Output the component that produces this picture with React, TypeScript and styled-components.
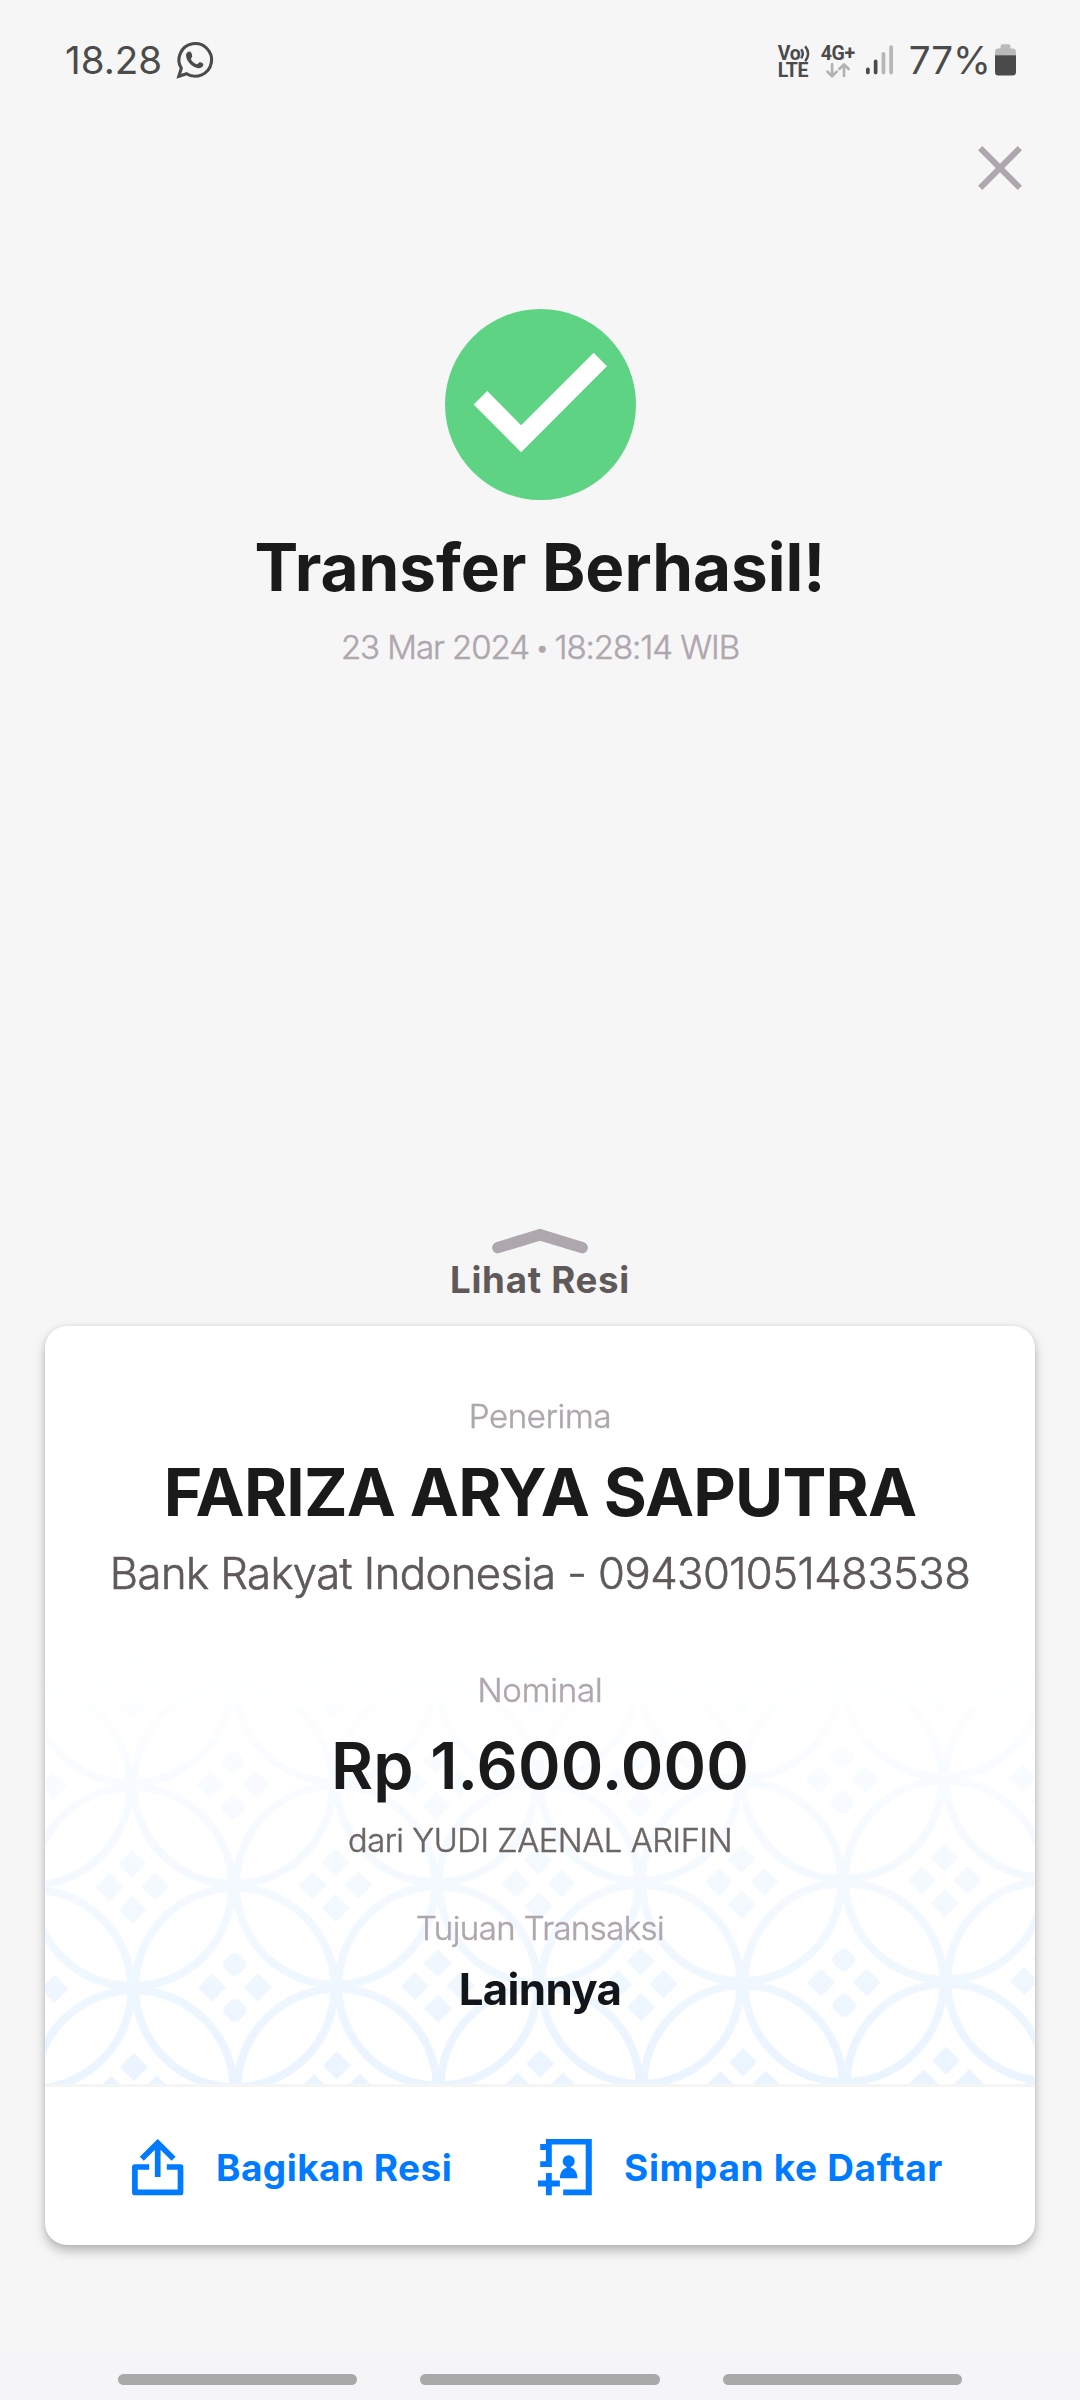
import React from "react";
import styled, { createGlobalStyle } from "styled-components";

const GlobalStyle = createGlobalStyle`
  *, *::before, *::after { box-sizing: border-box; }
  html, body { margin: 0; padding: 0; background: #f6f6f6; }
  body { font-family: Inter, "Liberation Sans", sans-serif; }
  button { border: 0; padding: 0; background: none; font: inherit; }
`;

const ink = "#1a1a1a";
const mutedInk = "#5f5959";
const faint = "#aea7ae";
const brand = "#007bff";
const system = "#4b4b4b";

const Screen = styled.div`
  display: flex;
  flex-direction: column;
  width: 1080px;
  height: 2400px;
  overflow: hidden;
  background: #f6f6f6;
`;

const StatusBar = styled.header`
  display: flex;
  align-items: center;
  justify-content: space-between;
  height: 120px;
  padding: 0 64px 0 65px;
  color: ${system};
`;

const StatusGroup = styled.div<{ $gap: number }>`
  display: flex;
  align-items: center;
  gap: ${(p) => p.$gap}px;
`;

const StatusText = styled.span<{ $spacing?: number }>`
  font-size: 38.6px;
  font-weight: 400;
  line-height: 48px;
  letter-spacing: ${(p) => p.$spacing ?? 0}px;
`;

const BatteryGroup = styled.div`
  display: flex;
  align-items: center;
  gap: 4px;
  margin-left: 3px;
`;

const StatusGlyph = styled.svg`
  display: block;
  flex: none;
  overflow: visible;
`;

const NetworkBadge = styled.div<{ $width: number }>`
  display: flex;
  flex-direction: column;
  width: ${(p) => p.$width}px;
  padding-top: 3px;
  font-family: Roboto, sans-serif;
  font-size: 19.5px;
  font-weight: 700;
  letter-spacing: -0.3px;
`;

const BadgeLine = styled.div<{ $inset?: number }>`
  display: flex;
  align-items: center;
  height: 17px;
  padding-left: ${(p) => p.$inset ?? 0}px;
  line-height: 17px;
`;

const TopBar = styled.div`
  display: flex;
  align-items: center;
  justify-content: flex-end;
  height: 96px;
  padding-right: 58px;
`;

const CloseButton = styled.button`
  display: block;
  width: 44px;
  height: 44px;
`;

const Hero = styled.section`
  display: flex;
  flex-direction: column;
  align-items: center;
  padding-top: 93px;
`;

const Title = styled.h1`
  margin: 27px 0 0;
  font-size: 65.6px;
  font-weight: 700;
  line-height: 80px;
  letter-spacing: -0.02px;
  color: ${ink};
`;

const Timestamp = styled.p`
  display: flex;
  align-items: center;
  gap: 6.5px;
  height: 44px;
  margin: 18px 0 0;
  font-size: 33px;
  font-weight: 300;
  line-height: 44px;
  letter-spacing: -1.05px;
  color: ${faint};
  -webkit-text-stroke: 0.5px ${faint};
`;

const Bullet = styled.span`
  padding-top: 2px;
  font-size: 24px;
  line-height: 40px;
`;

const ReceiptToggle = styled.button`
  display: flex;
  flex-direction: column;
  align-items: center;
  gap: 4px;
  margin-top: 559px;
`;

const ToggleLabel = styled.span`
  font-size: 36.7px;
  font-weight: 700;
  line-height: 44px;
  letter-spacing: 0.7px;
  color: ${mutedInk};
`;

const Card = styled.article`
  display: flex;
  flex-direction: column;
  width: 990px;
  height: 919px;
  margin: 24px auto 0;
  overflow: hidden;
  border-radius: 22px;
  background: #fff;
  box-shadow: 0 6px 11px rgba(0, 0, 0, 0.25), 0 0 5px rgba(0, 0, 0, 0.08);
`;

const CardBody = styled.div`
  position: relative;
  display: flex;
  flex-direction: column;
  align-items: center;
  height: 758px;
  padding-top: 70px;
`;

const BatikLayer = styled.svg`
  position: absolute;
  left: 0;
  bottom: 0;
  display: block;
`;

const Content = styled.div`
  position: relative;
  display: flex;
  flex-direction: column;
  align-items: center;
  white-space: nowrap;
`;

const Label = styled.span<{ $top?: number; $spacing?: number }>`
  margin-top: ${(p) => p.$top ?? 0}px;
  font-size: 33px;
  font-weight: 300;
  line-height: 40px;
  letter-spacing: ${(p) => p.$spacing ?? 0}px;
  color: ${faint};
  -webkit-text-stroke: 0.5px ${faint};
`;

const Headline = styled.strong<{ $weight: number; $size: number; $spacing: number }>`
  margin-top: 20px;
  font-size: ${(p) => p.$size}px;
  font-weight: ${(p) => p.$weight};
  line-height: 72px;
  letter-spacing: ${(p) => p.$spacing}px;
  color: ${ink};
`;

const Account = styled.span`
  margin-top: 20px;
  font-size: 43.6px;
  font-weight: 300;
  line-height: 52px;
  letter-spacing: -0.55px;
  color: ${mutedInk};
  -webkit-text-stroke: 0.6px ${mutedInk};
`;

const Sender = styled.span`
  margin-top: 18px;
  font-size: 32.7px;
  font-weight: 300;
  line-height: 40px;
  letter-spacing: -0.42px;
  color: #6c6666;
  -webkit-text-stroke: 0.5px #6c6666;
`;

const Purpose = styled.strong`
  margin-top: 17px;
  font-size: 43.8px;
  font-weight: 700;
  line-height: 50px;
  letter-spacing: -0.65px;
  color: #12161a;
`;

const Actions = styled.footer`
  display: grid;
  grid-template-columns: 406px 1fr;
  align-items: center;
  flex: 1;
  padding: 2px 0 0 87px;
  border-top: 3px solid #f5f5f5;
`;

const Action = styled.button<{ $spacing: number }>`
  display: flex;
  align-items: center;
  gap: 32px;
  font-size: 37px;
  font-weight: 700;
  line-height: 56px;
  letter-spacing: ${(p) => p.$spacing}px;
  white-space: nowrap;
  color: ${brand};
`;

const ActionText = styled.span`
  padding-top: 1px;
`;

const NavBar = styled.nav`
  display: flex;
  align-items: flex-end;
  gap: 63px;
  height: 48px;
  margin-top: auto;
  padding: 0 118px 15px;
  background: #f5f5f8;
`;

const NavHandle = styled.span`
  flex: 1;
  height: 11px;
  border-radius: 6px;
  background: #a9a9a9;
`;

function ChatIcon() {
  return (
    <StatusGlyph width="36" height="36" viewBox="0 0 36 36" fill="none">
      <path
        d="M4.3 26.3 L1.8 34.3 L9.6 31.7 A16.3 16.3 0 1 0 4.3 26.3Z"
        stroke={system}
        strokeWidth="3.1"
      />
      <path
        d="M9 13C9 10.5 11.5 9.3 13 9.6C14.3 9.8 15.3 13 15.2 14.5C15.1 15.7 13.6 16.2 14 17.3C15 19.8 17.5 21.8 19.8 22.3C21 22.4 21.5 20.3 23 20.2C24.5 20.2 26.5 21.3 26.4 22.7C26.2 24.8 23.5 26.3 21.5 26.2C15.5 25.6 9 19.5 9 13Z"
        fill={system}
      />
    </StatusGlyph>
  );
}

function VoiceWaves() {
  return (
    <StatusGlyph width="10" height="17" viewBox="0 0 10 17" fill="none" stroke={system} strokeWidth="2.4">
      <path d="M1.2 4.2Q4.4 8.6 1.2 13.4" />
      <path d="M5.2 1.2Q11 8.6 5.2 16.2" />
    </StatusGlyph>
  );
}

function DataArrows() {
  return (
    <StatusGlyph width="24" height="15" viewBox="0 0 24 15" fill="none" stroke="#b3b3b3" strokeWidth="2.7" strokeLinecap="round" strokeLinejoin="round">
      <path d="M6.1 1.4V13M1.4 8.6L6.1 13.2L10.8 8.6" />
      <path d="M18 13V2M13.3 6L18 1.4L22.7 6" />
    </StatusGlyph>
  );
}

function SignalIcon() {
  return (
    <StatusGlyph width="28" height="30" viewBox="0 0 28 30">
      <rect x="0" y="22.4" width="3.7" height="7" rx="1.8" fill={system} />
      <rect x="7.8" y="14.6" width="3.7" height="14.8" rx="1.8" fill={system} />
      <rect x="15.6" y="7" width="3.7" height="22.4" rx="1.8" fill="#b6b6b6" />
      <rect x="23.3" y="0.3" width="3.7" height="29.1" rx="1.8" fill="#b6b6b6" />
    </StatusGlyph>
  );
}

function BatteryIcon() {
  return (
    <StatusGlyph width="21" height="32" viewBox="0 0 21 32">
      <path d="M0 11.5V8Q0 4.6 3.4 4.6H5.6V2Q5.6 .2 7.4 .2H13.6Q15.4 .2 15.4 2V4.6H17.6Q21 4.6 21 8V11.5Z" fill="#bababa" />
      <path d="M0 11.3H21V28Q21 31.5 17.6 31.5H3.4Q0 31.5 0 28Z" fill={system} />
    </StatusGlyph>
  );
}

function SuccessMark() {
  return (
    <svg width="191" height="191" viewBox="0 0 191 191">
      <circle cx="95.5" cy="95.5" r="95.5" fill="#5ed383" />
      <path d="M148.7 43.7L161.9 57.2L76.1 143.2L28.6 95.4L42.2 82L76.1 116.2Z" fill="#fff" />
    </svg>
  );
}

function ShareIcon() {
  return (
    <svg width="52" height="57" viewBox="0 0 52 57" fill="none" stroke={brand} strokeWidth="5.7">
      <path d="M17.2 28H2.9V53.4H48.5V28H34.8" strokeLinejoin="round" />
      <path d="M9.8 19.8L25.7 4L41.6 19.8M25.7 4V38" />
    </svg>
  );
}

function SaveContactIcon() {
  return (
    <svg width="54" height="57" viewBox="0 0 54 57" fill={brand}>
      <path d="M7.9 0H53.8V56.2H25.2V50.4H47.7V5.6H13.8V28H2.2V22.3H7.9V11H2.2V5H7.9Z" />
      <path d="M7.9 34H13.8V41.5H21.9V47.6H13.8V56.2H7.9V47.6H0V41.5H7.9Z" />
      <circle cx="30.7" cy="22.3" r="6" />
      <path d="M21.9 39.2C22 33 25 29.6 28.6 28.8V26H32.8V28.8C36.4 29.6 39.4 33 39.5 39.2Z" />
    </svg>
  );
}

const STEP = 101.53;
const COLUMNS = Array.from({ length: 13 }, (_, i) => i - 2);
const ROWS = Array.from({ length: 7 }, (_, i) => i - 4);
const GEMS = [
  [0, -22.8],
  [0, 22.8],
  [-22.8, 0],
  [22.8, 0],
];

function Batik() {
  return (
    <BatikLayer width="990" height="460" viewBox="0 0 990 460">
      <defs>
        <linearGradient id="batik-fade" x1="0" y1="0" x2="0" y2="1">
          <stop offset="0.05" stopColor="#fff" stopOpacity="0" />
          <stop offset="1" stopColor="#fff" stopOpacity="1" />
        </linearGradient>
        <mask id="batik-mask" maskUnits="userSpaceOnUse" x="0" y="0" width="990" height="460">
          <rect width="990" height="460" fill="url(#batik-fade)" />
        </mask>
      </defs>
      <g mask="url(#batik-mask)">
        <g transform="translate(88.3 364.3) rotate(-0.46)">
          {ROWS.map((row) =>
            COLUMNS.map((col) => {
              if ((row + col) % 2 === 0) return null;
              const rounded = (col + 5) % 6 === 0;
              return (
                <g key={`${row}:${col}`} transform={`translate(${col * STEP} ${row * STEP})`}>
                  <circle r="99.6" fill="none" stroke="#eaf4ff" strokeWidth="8" />
                  {GEMS.map(([x, y]) => (
                    <rect
                      key={`${x}:${y}`}
                      x="-10"
                      y="-10"
                      width="20"
                      height="20"
                      rx={rounded && x === 0 ? 6 : 0.5}
                      fill="#eaf4ff"
                      transform={`translate(${x} ${y}) rotate(45)`}
                    />
                  ))}
                </g>
              );
            }),
          )}
        </g>
      </g>
    </BatikLayer>
  );
}

export default function App() {
  return (
    <>
      <GlobalStyle />
      <Screen>
        <StatusBar>
          <StatusGroup $gap={15}>
            <StatusText>18.28</StatusText>
            <ChatIcon />
          </StatusGroup>
          <StatusGroup $gap={12}>
            <NetworkBadge $width={31}>
              <BadgeLine>
                Vo
                <VoiceWaves />
              </BadgeLine>
              <BadgeLine>LTE</BadgeLine>
            </NetworkBadge>
            <NetworkBadge $width={33}>
              <BadgeLine>4G+</BadgeLine>
              <BadgeLine $inset={5}>
                <DataArrows />
              </BadgeLine>
            </NetworkBadge>
            <SignalIcon />
            <BatteryGroup>
              <StatusText>77%</StatusText>
              <BatteryIcon />
            </BatteryGroup>
          </StatusGroup>
        </StatusBar>

        <TopBar>
          <CloseButton aria-label="Tutup">
            <svg width="44" height="44" viewBox="0 0 44 44" stroke={faint} strokeWidth="6">
              <path d="M2.2 2.2L41.8 41.8M41.8 2.2L2.2 41.8" />
            </svg>
          </CloseButton>
        </TopBar>

        <Hero>
          <SuccessMark />
          <Title>Transfer Berhasil!</Title>
          <Timestamp>
            <span>23 Mar 2024</span>
            <Bullet>•</Bullet>
            <span>18:28:14 WIB</span>
          </Timestamp>
        </Hero>

        <ReceiptToggle>
          <svg width="96" height="26" viewBox="0 0 96 26" fill="none" stroke={faint} strokeWidth="11.4" strokeLinecap="round">
            <path d="M5.8 19.6L48 6.8L90.2 19.6" />
          </svg>
          <ToggleLabel>Lihat Resi</ToggleLabel>
        </ReceiptToggle>

        <Card>
          <CardBody>
            <Batik />
            <Content>
              <Label $spacing={-0.3}>Penerima</Label>
              <Headline $weight={700} $size={65.8} $spacing={-0.83}>FARIZA ARYA SAPUTRA</Headline>
              <Account>Bank Rakyat Indonesia - 094301051483538</Account>
              <Label $top={70} $spacing={-0.2}>Nominal</Label>
              <Headline $weight={600} $size={64.6} $spacing={0.15}>Rp 1.600.000</Headline>
              <Sender>dari YUDI ZAENAL ARIFIN</Sender>
              <Label $top={48} $spacing={-0.6}>Tujuan Transaksi</Label>
              <Purpose>Lainnya</Purpose>
            </Content>
          </CardBody>
          <Actions>
            <Action $spacing={0.45}>
              <ShareIcon />
              <ActionText>Bagikan Resi</ActionText>
            </Action>
            <Action $spacing={0.68}>
              <SaveContactIcon />
              <ActionText>Simpan ke Daftar</ActionText>
            </Action>
          </Actions>
        </Card>

        <NavBar>
          <NavHandle />
          <NavHandle />
          <NavHandle />
        </NavBar>
      </Screen>
    </>
  );
}
